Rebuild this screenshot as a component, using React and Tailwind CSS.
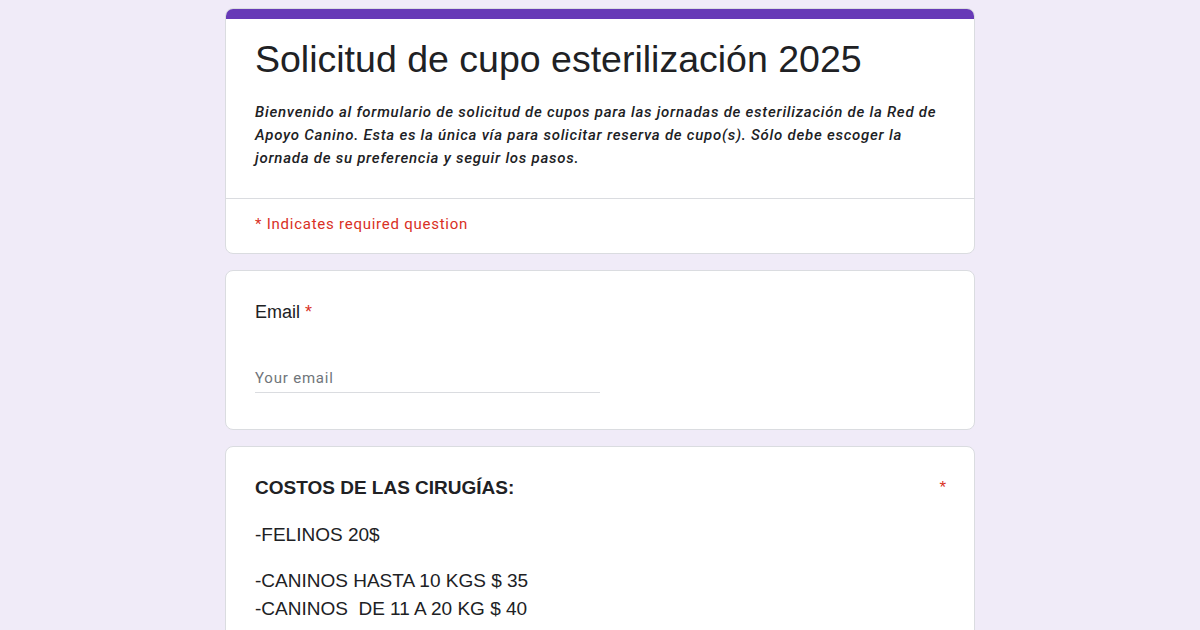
import React from "react";

export default function App() {
  return (
    <div className="min-h-[630px] w-full bg-[#f0ebf8] pt-2 pb-6">
      <div className="mx-auto flex w-[750px] flex-col gap-4">
        {/* Header card */}
        <div className="overflow-hidden rounded-lg border border-[#dadce0] bg-white">
          <div className="h-[10px] bg-[#673ab7]" />
          <div className="px-[29px] pt-[19px] pb-[28px]">
            <h1 className="font-['Liberation_Sans',Arial,sans-serif] text-[37.5px] leading-[43px] text-[#202124]">
              Solicitud de cupo esterilización 2025
            </h1>
            <p className="mt-[20px] font-['Roboto',sans-serif] text-[15px] font-medium italic leading-[23px] tracking-[0.75px] text-[#202124]">
              Bienvenido al formulario de solicitud de cupos para las jornadas de esterilización de la Red de Apoyo Canino. Esta es la única vía para solicitar reserva de cupo(s). Sólo debe escoger la jornada de su preferencia y seguir los pasos.
            </p>
          </div>
          <div className="border-t border-[#dadce0] px-[29px] pt-[15px] pb-[19px]">
            <p className="font-['Roboto',sans-serif] text-[15px] leading-5 tracking-[0.75px] text-[#d93025]">
              * Indicates required question
            </p>
          </div>
        </div>

        {/* Email card */}
        <div className="rounded-lg border border-[#dadce0] bg-white px-[29px] pt-[29px] pb-[36px]">
          <div className="font-['Liberation_Sans',Arial,sans-serif] text-[18px] leading-[24px] text-[#202124]">
            Email <span className="text-[#d93025]">*</span>
          </div>
          <div className="mt-[41px] w-[345px] border-b border-[#dadce0] pb-[3px]">
            <span className="font-['Roboto',sans-serif] text-[15px] leading-[22px] tracking-[0.8px] text-[#70757a]">
              Your email
            </span>
          </div>
        </div>

        {/* Costs card */}
        <div className="rounded-lg border border-[#dadce0] bg-white px-[29px] pt-[28px] pb-8">
          <div className="flex items-start justify-between">
            <div className="font-['Liberation_Sans',Arial,sans-serif] text-[19px] font-bold leading-[26px] text-[#202124]">
              COSTOS DE LAS CIRUGÍAS:
            </div>
            <span className="mr-[-1px] font-['Liberation_Sans',Arial,sans-serif] text-[17px] leading-[26px] text-[#d93025]">
              *
            </span>
          </div>
          <div className="mt-[20px] font-['Liberation_Sans',Arial,sans-serif] text-[19px] leading-[28px] text-[#202124]">
            <p>-FELINOS 20$</p>
            <p className="mt-[18px] whitespace-pre">-CANINOS HASTA 10 KGS $ 35</p>
            <p className="whitespace-pre">-CANINOS  DE 11 A 20 KG $ 40</p>
          </div>
        </div>
      </div>
    </div>
  );
}
